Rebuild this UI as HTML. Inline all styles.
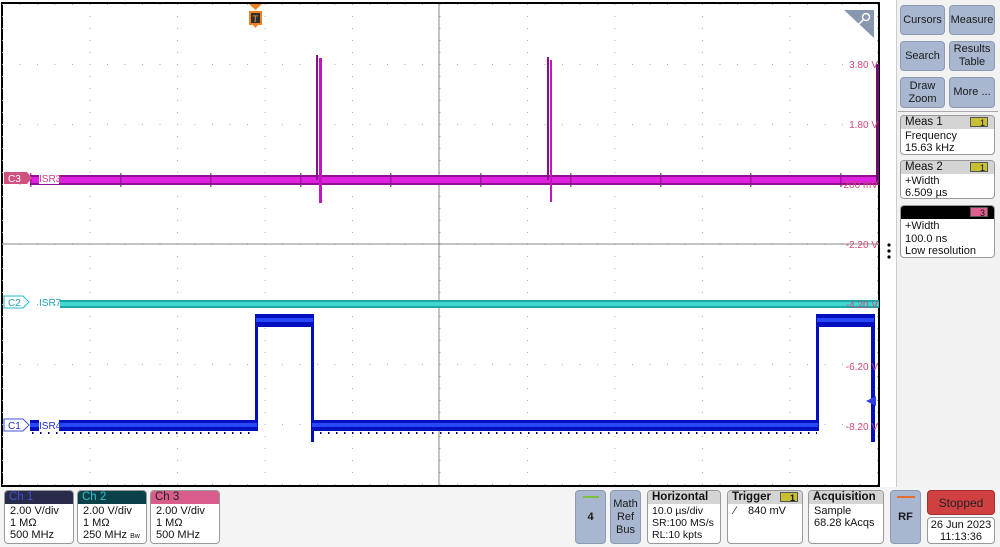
<!DOCTYPE html>
<html><head><meta charset="utf-8"><style>
body{margin:0;width:1000px;height:547px;overflow:hidden;background:#fff;font-family:"Liberation Sans",sans-serif;position:relative}
.a{position:absolute;box-sizing:border-box}
.btn{background:#a8b6cf;border:1px solid #8d9ab3;border-radius:4px;color:#1a1a1a;font-size:11px;text-align:center;display:flex;align-items:center;justify-content:center;line-height:13px}
.box{border:1px solid #999;border-radius:4px;background:#fff;font-size:11px;line-height:12px;color:#111;overflow:hidden;white-space:nowrap}
.hd{background:#d4d4d4;padding:0 4px;height:13px;font-size:11.5px;line-height:13px;position:relative}
.tag{position:absolute;right:6px;top:1px;width:18px;height:10px;background:#c8c030;border:1px solid #555;font-size:9px;line-height:10px;text-align:right;padding-right:2px;box-sizing:border-box}
</style></head><body>
<svg class="a" style="left:0;top:0" width="895" height="487" viewBox="0 0 895 487">
<defs>
<pattern id="dots" x="2" y="4" width="17.5" height="60" patternUnits="userSpaceOnUse"><rect x="0" y="0" width="1" height="1" fill="#aaa"/></pattern>
<pattern id="dotsv" x="2" y="4" width="87.5" height="12" patternUnits="userSpaceOnUse"><rect x="0" y="0" width="1" height="1" fill="#aaa"/></pattern>
<pattern id="tk3" x="0" y="0" width="90" height="14" patternUnits="userSpaceOnUse"><rect x="30" y="0" width="1.5" height="14" fill="#7a1a7a"/></pattern>
<pattern id="tkc" x="0" y="0" width="7" height="6" patternUnits="userSpaceOnUse"><rect x="0" y="0" width="2" height="3" fill="#0a5a5a"/></pattern>
<pattern id="tkb" x="0" y="0" width="8" height="4" patternUnits="userSpaceOnUse"><rect x="0" y="0" width="1.5" height="3" fill="#000080"/></pattern>
</defs>
<rect x="2" y="3" width="877" height="483" fill="#fff" stroke="#000" stroke-width="2"/>
<rect x="2" y="4" width="877" height="481" fill="url(#dots)"/>
<rect x="2" y="4" width="877" height="481" fill="url(#dotsv)"/>
<line x1="2" y1="244" x2="879" y2="244" stroke="#888" stroke-width="1"/>
<line x1="439" y1="4" x2="439" y2="485" stroke="#888" stroke-width="1"/>
<!-- C3 magenta -->
<rect x="30" y="175" width="849" height="10" fill="#e020e0"/>
<rect x="30" y="175" width="849" height="2" fill="#901090"/>
<rect x="30" y="183" width="849" height="2" fill="#901090"/>
<rect x="30" y="173" width="849" height="14" fill="url(#tk3)" opacity=".7"/>
<rect x="316" y="55" width="2" height="125" fill="#8a108a"/>
<rect x="319" y="58" width="3" height="145" fill="#c018c0"/>
<rect x="547" y="57" width="2" height="123" fill="#8a108a"/>
<rect x="550" y="60" width="2" height="142" fill="#c018c0"/>
<rect x="876" y="64" width="3" height="120" fill="#6a106a"/>
<!-- C2 cyan -->
<rect x="60" y="297" width="819" height="5" fill="url(#tkc)"/>
<rect x="60" y="300" width="819" height="8" fill="#1aa8a8"/>
<rect x="60" y="302" width="819" height="4" fill="#40d8d0"/>
<!-- C1 blue -->
<g fill="#0010c0">
<rect x="30" y="420" width="227" height="11"/>
<rect x="312" y="420" width="506" height="11"/>
<rect x="256" y="314" width="57" height="13"/>
<rect x="817" y="314" width="57" height="13"/>
<rect x="255" y="314" width="3" height="117"/>
<rect x="311" y="314" width="3" height="128"/>
<rect x="816" y="314" width="3" height="117"/>
<rect x="871" y="314" width="4" height="128"/>
</g>
<g fill="#2848ff">
<rect x="30" y="423" width="227" height="4"/>
<rect x="312" y="423" width="506" height="4"/>
<rect x="256" y="318" width="57" height="4"/>
<rect x="817" y="318" width="57" height="4"/>
</g>
<rect x="30" y="430" width="226" height="4" fill="url(#tkb)"/>
<rect x="313" y="430" width="504" height="4" fill="url(#tkb)"/>
<polygon points="866,401 876,396 876,406" fill="#3040e0"/>
<!-- labels -->
<path d="M4 172 H27 L32 178 L27 184 H4 Z" fill="#d05080"/>
<text x="8" y="182" font-size="10" fill="#fff" font-family="Liberation Sans">C3</text>
<rect x="39" y="173" width="20" height="11" fill="#fff"/>
<text x="39" y="182" font-size="10" fill="#d03c80" font-family="Liberation Sans">ISR3</text>
<path d="M4 296 H23 L29 302 L23 308 H4 Z" fill="#fff" stroke="#20b8c8"/>
<text x="8" y="306" font-size="10" fill="#20a0b8" font-family="Liberation Sans">C2</text>
<text x="39" y="306" font-size="10" fill="#20a0b8" font-family="Liberation Sans">ISR7</text>
<path d="M4 419 H23 L29 425 L23 431 H4 Z" fill="#fff" stroke="#4050e0"/>
<text x="8" y="429" font-size="10" fill="#2030c0" font-family="Liberation Sans">C1</text>
<rect x="39" y="420" width="20" height="11" fill="#fff"/>
<text x="39" y="429" font-size="10" fill="#2030c0" font-family="Liberation Sans">ISR4</text>
<!-- scale -->
<g font-size="10" fill="#d04878" font-family="Liberation Sans" text-anchor="end">
<text x="878" y="68">3.80 V</text><text x="878" y="128">1.80 V</text><text x="878" y="188">-200 mV</text>
<text x="878" y="248">-2.20 V</text><text x="878" y="308">-4.20 V</text><text x="878" y="370">-6.20 V</text><text x="878" y="430">-8.20 V</text>
</g>
<!-- trigger marker -->
<polygon points="249,4 262,4 255.5,10" fill="#f08020"/>
<rect x="249" y="11" width="13" height="14" fill="#f08020"/>
<rect x="251" y="13" width="9" height="10" fill="#303030"/>
<text x="252.5" y="22" font-size="9" fill="#f0a040" font-family="Liberation Sans">T</text>
<polygon points="253,25 258,25 255.5,28" fill="#f08020"/>
<!-- zoom corner -->
<polygon points="844,10 874,10 874,38" fill="#8896b0"/>
<circle cx="866" cy="17" r="3.5" fill="none" stroke="#fff" stroke-width="1.5"/>
<line x1="863" y1="20" x2="856" y2="27" stroke="#fff" stroke-width="1.5"/>
<circle cx="889" cy="245" r="1.6" fill="#000"/><circle cx="889" cy="251" r="1.6" fill="#000"/><circle cx="889" cy="257" r="1.6" fill="#000"/>
</svg>
<!-- right panel -->
<div class="a" style="left:896px;top:0;width:104px;height:487px;background:#f2f2f2;border-left:1px solid #ccc"></div>
<div class="a btn" style="left:900px;top:5px;width:45px;height:30px">Cursors</div>
<div class="a btn" style="left:949px;top:5px;width:46px;height:30px">Measure</div>
<div class="a btn" style="left:900px;top:41px;width:45px;height:30px">Search</div>
<div class="a btn" style="left:949px;top:41px;width:46px;height:30px">Results<br>Table</div>
<div class="a btn" style="left:900px;top:77px;width:45px;height:31px">Draw<br>Zoom</div>
<div class="a btn" style="left:949px;top:77px;width:46px;height:31px">More ...</div>
<div class="a" style="left:898px;top:111px;width:100px;height:1px;background:#aaa"></div>
<div class="a box" style="left:900px;top:115px;width:95px;height:40px"><div class="hd">Meas 1<span class="tag">1</span></div><div style="padding:1px 4px">Frequency<br>15.63 kHz</div></div>
<div class="a box" style="left:900px;top:160px;width:95px;height:39px"><div class="hd">Meas 2<span class="tag">1</span></div><div style="padding:1px 4px">+Width<br>6.509 µs</div></div>
<div class="a box" style="left:900px;top:205px;width:95px;height:53px"><div class="hd" style="background:#000">&nbsp;<span class="tag" style="background:#e06090">3</span></div><div style="padding:1px 4px;line-height:12.5px">+Width<br>100.0 ns<br>Low resolution</div></div>
<!-- bottom bar -->
<div class="a" style="left:0;top:487px;width:1000px;height:60px;background:#f4f4f4"></div>
<div class="a box" style="left:4px;top:490px;width:70px;height:54px"><div class="hd" style="background:#2a2a4a;color:#4050d0">Ch 1</div><div style="padding:1px 5px">2.00 V/div<br>1 MΩ<br>500 MHz</div></div>
<div class="a box" style="left:77px;top:490px;width:70px;height:54px"><div class="hd" style="background:#0a4048;color:#30c0d0">Ch 2</div><div style="padding:1px 5px">2.00 V/div<br>1 MΩ<br>250 MHz <span style="font-size:7px">Bw</span></div></div>
<div class="a box" style="left:150px;top:490px;width:70px;height:54px"><div class="hd" style="background:#d85c8c;color:#222">Ch 3</div><div style="padding:1px 5px">2.00 V/div<br>1 MΩ<br>500 MHz</div></div>
<div class="a btn" style="left:575px;top:490px;width:31px;height:54px;font-weight:bold">4<div class="a" style="left:7px;top:5px;width:16px;height:2px;background:#7bc040"></div></div>
<div class="a btn" style="left:610px;top:490px;width:31px;height:54px">Math<br>Ref<br>Bus</div>
<div class="a box" style="left:647px;top:490px;width:74px;height:54px"><div class="hd" style="font-weight:bold">Horizontal</div><div style="padding:1px 4px;font-size:10.5px">10.0 µs/div<br>SR:100 MS/s<br>RL:10 kpts</div></div>
<div class="a box" style="left:727px;top:490px;width:76px;height:54px"><div class="hd" style="font-weight:bold">Trigger<span class="tag" style="right:4px">1</span></div><div style="padding:1px 6px">⁄&nbsp;&nbsp;&nbsp;&nbsp;840 mV</div></div>
<div class="a box" style="left:808px;top:490px;width:76px;height:54px"><div class="hd" style="font-weight:bold">Acquisition</div><div style="padding:1px 5px">Sample<br>68.28 kAcqs</div></div>
<div class="a btn" style="left:890px;top:490px;width:31px;height:54px;font-weight:bold">RF<div class="a" style="left:6px;top:5px;width:18px;height:2px;background:#e07030"></div></div>
<div class="a" style="left:927px;top:490px;width:68px;height:25px;background:#d04040;border-radius:4px;border:1px solid #a03030;color:#222;font-size:12px;text-align:center;line-height:24px">Stopped</div>
<div class="a box" style="left:927px;top:517px;width:68px;height:27px;text-align:center;padding-top:1px">26 Jun 2023<br>11:13:36</div>
</body></html>
